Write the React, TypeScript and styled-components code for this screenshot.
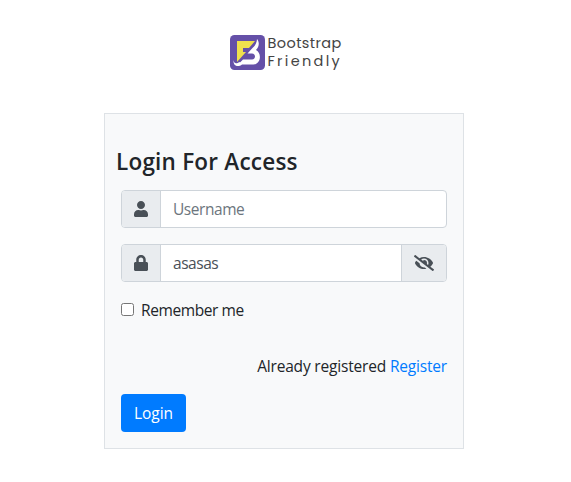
import React, { useState } from "react";
import styled, { createGlobalStyle } from "styled-components";
import { FaUser, FaLock, FaEyeSlash, FaEye } from "react-icons/fa";

const GlobalStyle = createGlobalStyle`
  *, *::before, *::after { box-sizing: border-box; }
  body {
    margin: 0;
    background: #fff;
    color: #212529;
    font: 400 15.5px/24px "Segoe UI", "Open Sans", "Noto Sans", sans-serif;
  }
`;

const Page = styled.main`
  display: flex;
  flex-direction: column;
  align-items: center;
  min-height: 482px;
  padding-right: 3px;
`;

const Brand = styled.header`
  display: flex;
  align-items: center;
  gap: 3px;
  height: 38px;
  margin: 33px 0 42px 5px;
`;

const BrandName = styled.div`
  display: flex;
  flex-direction: column;
  width: 76px;
  color: #444;
  font-family: Poppins, "Open Sans", sans-serif;
  font-size: 14.5px;
  line-height: 18px;
  white-space: nowrap;
`;

const BrandLine = styled.span<{ $tracking: string }>`
  display: block;
  height: 18px;
  letter-spacing: ${(p) => p.$tracking};
`;

const Card = styled.form`
  display: flex;
  flex-direction: column;
  width: 360px;
  height: 336px;
  padding: 32px 16px 16px;
  background: #f8f9fa;
  border: 1px solid #dee2e6;
`;

const Title = styled.h1`
  margin: 0 0 12px -5px;
  font-size: 22.5px;
  line-height: 32px;
  font-weight: 600;
  letter-spacing: 0.22px;
`;

const InputGroup = styled.div`
  display: flex;
  flex: none;
  height: 38px;
  margin-bottom: 16px;
  overflow: hidden;
  border: 1px solid #ced4da;
  border-radius: 4px;
  background: #fff;
`;

const Addon = styled.span<{ $side: "left" | "right" }>`
  display: flex;
  align-items: center;
  justify-content: center;
  flex: none;
  width: ${(p) => (p.$side === "left" ? "39px" : "45px")};
  background: #e9ecef;
  color: #495057;
  border: 0 solid #ced4da;
  ${(p) => (p.$side === "left" ? "border-right-width: 1px;" : "border-left-width: 1px;")}
`;

const Field = styled.input`
  flex: 1;
  min-width: 0;
  padding: 0 12px;
  border: 0;
  outline: 0;
  background: transparent;
  color: #495057;
  font: inherit;
  letter-spacing: -0.45px;
  &::placeholder { color: #6c757d; opacity: 1; }
`;

const Remember = styled.label`
  display: flex;
  align-items: center;
  height: 24px;
  gap: 7px;
  letter-spacing: -0.4px;
`;

const Checkbox = styled.input`
  width: 13px;
  height: 13px;
  margin: 0 0 2px;
`;

const Hint = styled.p`
  margin: 32px 0 16px;
  text-align: right;
  letter-spacing: -0.18px;
`;

const Link = styled.a`
  color: #007bff;
  text-decoration: none;
`;

const Submit = styled.button`
  align-self: flex-start;
  width: 65px;
  height: 38px;
  padding: 0;
  border: 0;
  border-radius: 4px;
  background: #007bff;
  color: #fff;
  font: inherit;
`;

const Logo = () => (
  <svg width="35" height="35" viewBox="0 0 35 35" aria-hidden="true">
    <rect width="35" height="35" rx="4.5" fill="#6550a8" />
    <path d="M7 6H25L19 13H13V17H16L7 27Z" fill="#efe04e" />
    <path
      d="M27 4C29.5 7 29.5 11.5 26 15C32 18 31 29 23.5 29.5H8L13 24.5H22C26 24.5 26 18.5 22 18.5H17.5L22.5 13C25 11 26.8 8 27 4Z"
      fill="#fff"
    />
    <path d="M3.5 25C4 29 6.5 29 9.5 27L12 29.5C8.5 32.5 3 31.5 3.5 25Z" fill="#fff" />
  </svg>
);

export default function App() {
  const [password, setPassword] = useState("asasas");
  const [visible, setVisible] = useState(true);
  return (
    <>
      <GlobalStyle />
      <Page>
        <Brand>
          <Logo />
          <BrandName>
            <BrandLine $tracking="0.4px">Bootstrap</BrandLine>
            <BrandLine $tracking="2.3px">Friendly</BrandLine>
          </BrandName>
        </Brand>
        <Card onSubmit={(e) => e.preventDefault()}>
          <Title>Login For Access</Title>
          <InputGroup>
            <Addon $side="left"><FaUser size={16} /></Addon>
            <Field placeholder="Username" aria-label="Username" />
          </InputGroup>
          <InputGroup>
            <Addon $side="left"><FaLock size={16} /></Addon>
            <Field
              type={visible ? "text" : "password"}
              value={password}
              onChange={(e) => setPassword(e.target.value)}
              aria-label="Password"
            />
            <Addon $side="right" onClick={() => setVisible(!visible)}>
              {visible ? <FaEyeSlash size={20} /> : <FaEye size={20} />}
            </Addon>
          </InputGroup>
          <Remember>
            <Checkbox type="checkbox" />
            Remember me
          </Remember>
          <Hint>
            Already registered <Link href="#">Register</Link>
          </Hint>
          <Submit type="submit">Login</Submit>
        </Card>
      </Page>
    </>
  );
}
